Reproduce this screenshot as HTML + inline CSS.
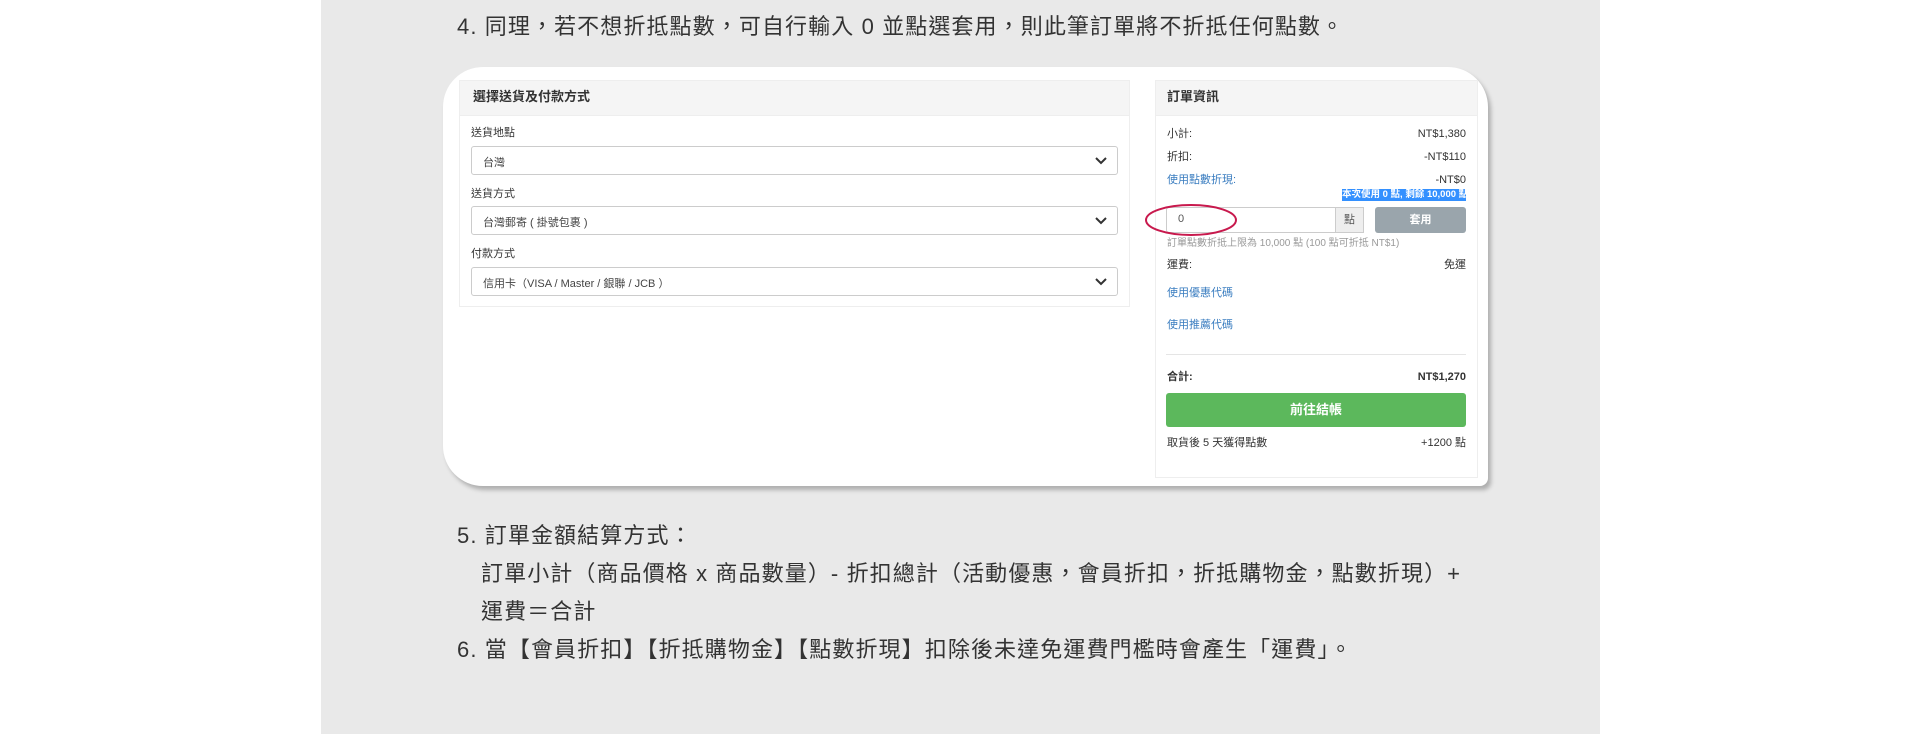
<!DOCTYPE html>
<html><head><meta charset="utf-8"><style>
*{margin:0;padding:0;box-sizing:border-box}
body{width:1920px;height:734px;background:#fff;position:relative;overflow:hidden;font-family:"Liberation Sans","Noto Sans CJK TC",sans-serif;color:#333}
.gray{position:absolute;left:321px;top:0;width:1279px;height:734px;background:#e9e9e9}
.t{position:absolute;font-size:22px;color:#333;letter-spacing:1.1px;white-space:nowrap;line-height:1}
.card{position:absolute;left:443px;top:67px;width:1045px;height:419px;background:#fff;border-radius:40px 40px 8px 40px;box-shadow:3px 4px 4px rgba(0,0,0,.25)}
.a{position:absolute;white-space:nowrap;line-height:1;font-size:12px;color:#333}
.panel{position:absolute;background:#fff;border:1px solid #eee}
.ph{position:absolute;left:0;top:0;right:0;height:35px;background:#f5f5f5;border-bottom:1px solid #eee}
.sel{position:absolute;left:471px;width:647px;height:29px;border:1px solid #ccc;border-radius:3px;background:#fff}
.sel span{position:absolute;left:11px;top:7px;font-size:11px;color:#444}
.sel svg{position:absolute;right:10px;top:10px}
.blue{color:#3a7dc0}
.r{text-align:right}
</style></head><body>
<div class="gray"></div>
<div class="t" style="left:457px;top:16px">4. 同理，若不想折抵點數，可自行輸入 0 並點選套用，則此筆訂單將不折抵任何點數。</div>
<div class="card"></div>

<div class="panel" style="left:459px;top:80px;width:671px;height:227px"><div class="ph"></div></div>
<div class="a" style="left:473px;top:90px;font-size:13px;font-weight:bold">選擇送貨及付款方式</div>
<div class="a" style="left:471px;top:128px;font-size:11px">送貨地點</div>
<div class="sel" style="top:146px"><span>台灣</span><svg width="12" height="8"><path d="M1 1l5 5 5-5" stroke="#333" stroke-width="2" fill="none"/></svg></div>
<div class="a" style="left:471px;top:189px;font-size:11px">送貨方式</div>
<div class="sel" style="top:206px"><span>台灣郵寄 ( 掛號包裹 )</span><svg width="12" height="8"><path d="M1 1l5 5 5-5" stroke="#333" stroke-width="2" fill="none"/></svg></div>
<div class="a" style="left:471px;top:249px;font-size:11px">付款方式</div>
<div class="sel" style="top:267px"><span>信用卡（VISA / Master / 銀聯 / JCB ）</span><svg width="12" height="8"><path d="M1 1l5 5 5-5" stroke="#333" stroke-width="2" fill="none"/></svg></div>

<div class="panel" style="left:1155px;top:80px;width:323px;height:398px"><div class="ph"></div></div>
<div class="a" style="left:1167px;top:90px;font-size:13px;font-weight:bold">訂單資訊</div>
<div class="a" style="left:1167px;top:129px;font-size:11px">小計:</div><div class="a r" style="right:454px;top:129px;font-size:11px">NT$1,380</div>
<div class="a" style="left:1167px;top:152px;font-size:11px">折扣:</div><div class="a r" style="right:454px;top:152px;font-size:11px">-NT$110</div>
<div class="a blue" style="left:1167px;top:175px;font-size:11px">使用點數折現:</div><div class="a r" style="right:454px;top:175px;font-size:11px">-NT$0</div>
<div class="a" style="left:1342px;top:189px;width:124px;height:12px;background:#3390ff;color:#fff;font-size:9.5px;line-height:12px;text-align:right;font-weight:bold">本次使用 0 點, 剩餘 10,000 點</div>
<div style="position:absolute;left:1166px;top:207px;width:170px;height:26px;border:1px solid #ccc;border-radius:3px 0 0 3px;background:#fff"></div>
<div class="a" style="left:1178px;top:214px;font-size:11px;color:#555">0</div>
<div style="position:absolute;left:1335px;top:207px;width:29px;height:26px;border:1px solid #ccc;background:#eee;font-size:11px;text-align:center;line-height:24px;color:#555">點</div>
<div style="position:absolute;left:1375px;top:207px;width:91px;height:26px;background:#9aa5ac;border-radius:3px;color:#fff;font-size:11px;font-weight:bold;text-align:center;line-height:26px">套用</div>
<svg style="position:absolute;left:1144px;top:202px" width="95" height="36"><ellipse cx="47" cy="18" rx="45" ry="15" fill="none" stroke="#c8194d" stroke-width="2"/></svg>
<div class="a" style="left:1167px;top:239px;font-size:10px;color:#999">訂單點數折抵上限為 10,000 點 (100 點可折抵 NT$1)</div>
<div class="a" style="left:1167px;top:260px;font-size:11px">運費:</div><div class="a r" style="right:454px;top:260px;font-size:11px">免運</div>
<div class="a blue" style="left:1167px;top:288px;font-size:11px">使用優惠代碼</div>
<div class="a blue" style="left:1167px;top:320px;font-size:11px">使用推薦代碼</div>
<div style="position:absolute;left:1166px;top:354px;width:300px;height:1px;background:#e5e5e5"></div>
<div class="a" style="left:1167px;top:372px;font-size:11px;font-weight:bold">合計:</div><div class="a r" style="right:454px;top:372px;font-size:11px;font-weight:bold">NT$1,270</div>
<div style="position:absolute;left:1166px;top:393px;width:300px;height:34px;background:#5cb85c;border-radius:3px;color:#fff;font-size:13px;font-weight:bold;text-align:center;line-height:34px">前往結帳</div>
<div class="a" style="left:1167px;top:438px;font-size:11px">取貨後 5 天獲得點數</div><div class="a r" style="right:454px;top:438px;font-size:11px">+1200 點</div>

<div class="t" style="left:457px;top:525px">5. 訂單金額結算方式：</div>
<div class="t" style="left:481px;top:563px">訂單小計（商品價格 x 商品數量）- 折扣總計（活動優惠，會員折扣，折抵購物金，點數折現）+</div>
<div class="t" style="left:481px;top:601px">運費＝合計</div>
<div class="t" style="left:457px;top:639px">6. 當【會員折扣】【折抵購物金】【點數折現】扣除後未達免運費門檻時會產生「運費」。</div>
</body></html>
